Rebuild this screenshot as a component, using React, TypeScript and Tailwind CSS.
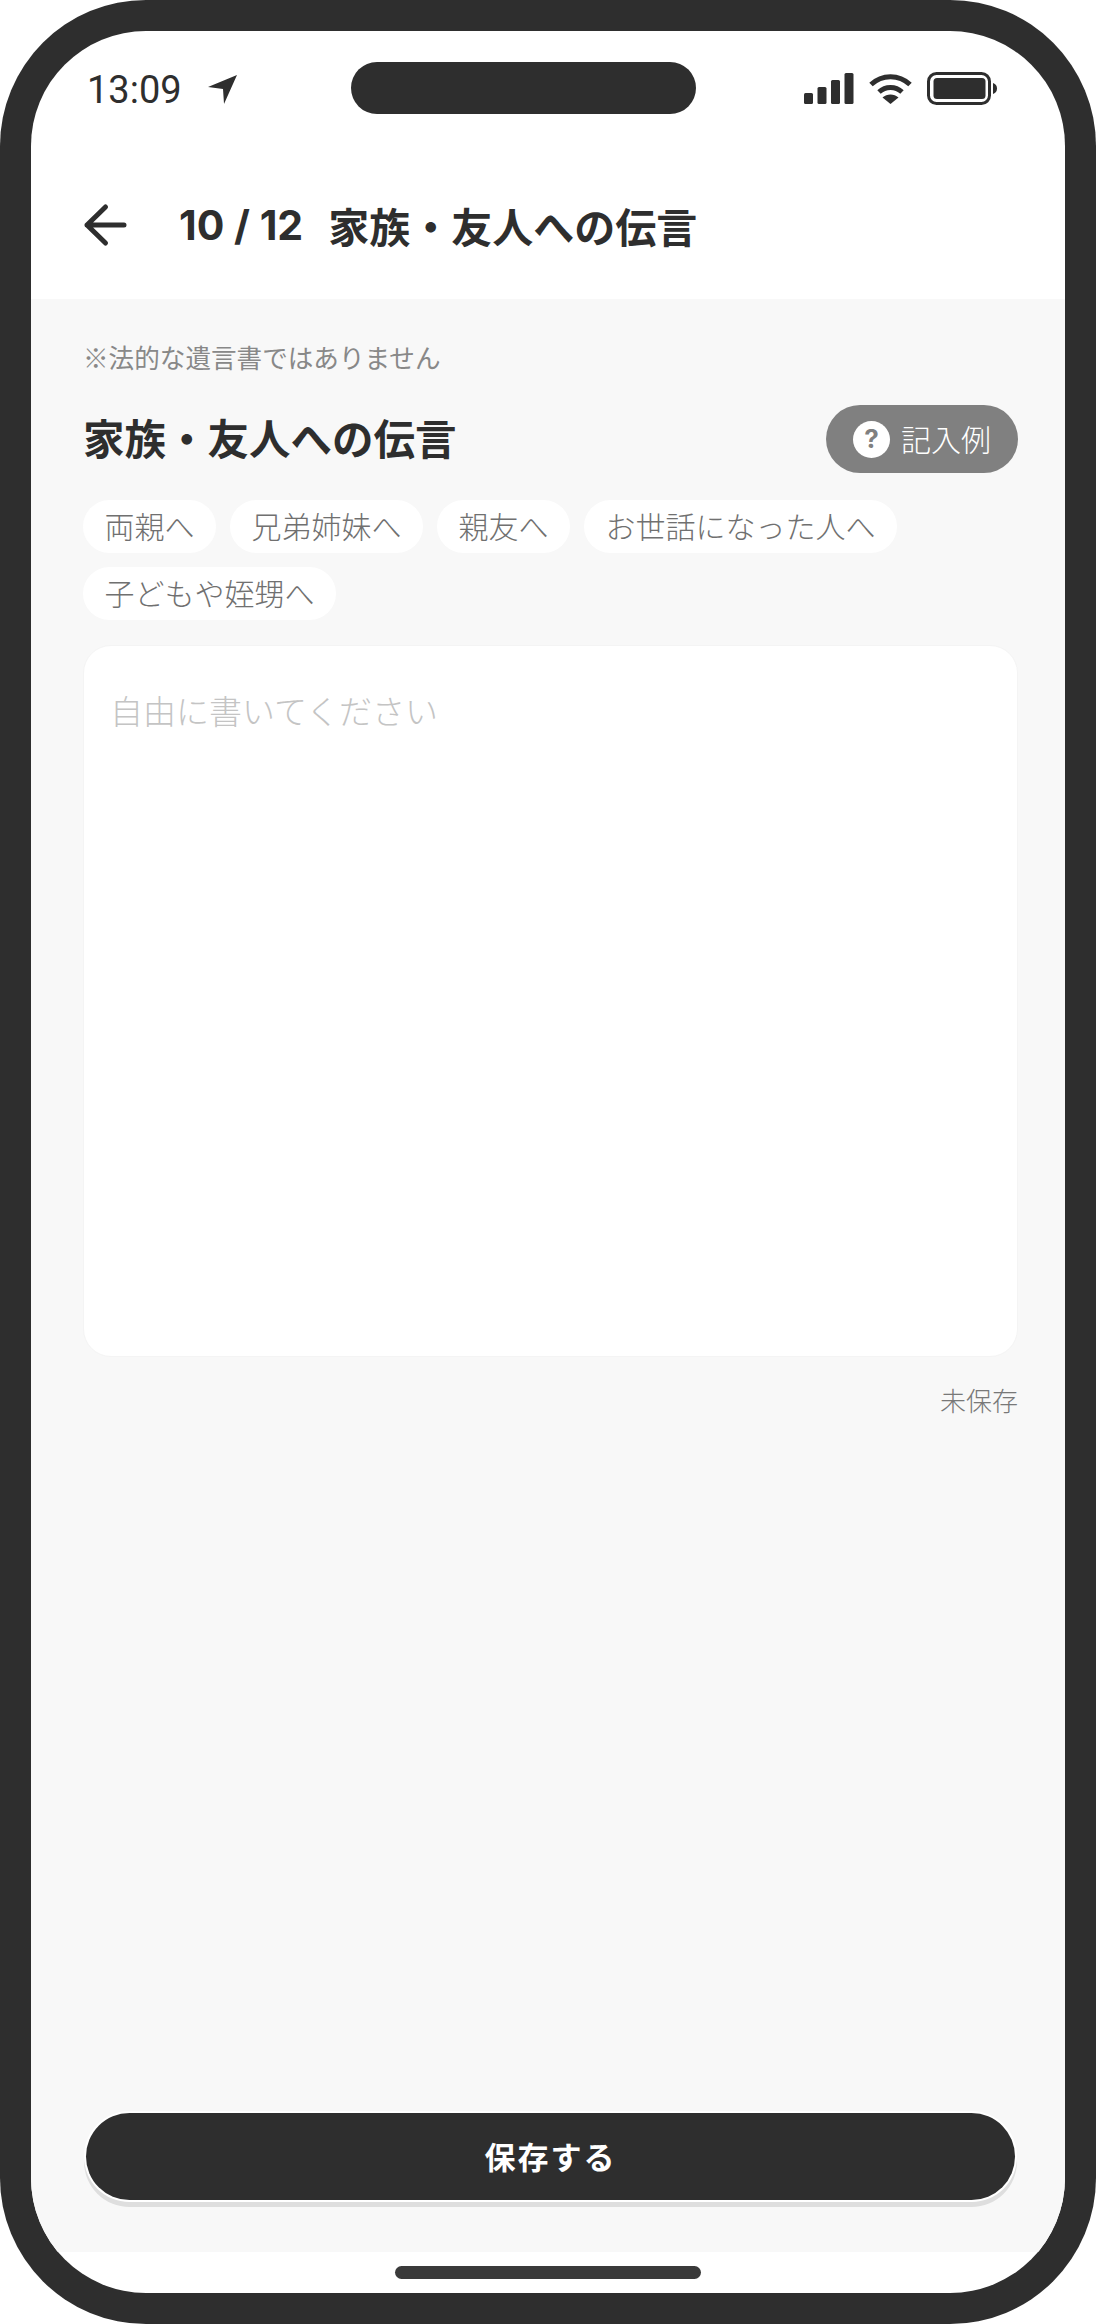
import React from 'react';

const chips = ['両親へ', '兄弟姉妹へ', '親友へ', 'お世話になった人へ', '子どもや姪甥へ'];

function StatusIcons() {
  return (
    <div className="flex items-center gap-[15px]">
      <svg width="50" height="31" viewBox="0 0 50 31" fill="#2e2e2e">
        <rect x="0" y="20" width="9" height="11" rx="1.5" />
        <rect x="13.5" y="14" width="9" height="17" rx="1.5" />
        <rect x="27" y="7" width="9" height="24" rx="1.5" />
        <rect x="40.5" y="0" width="9" height="31" rx="1.5" />
      </svg>
      <svg width="43" height="31" viewBox="0 0 43 31" fill="none" stroke="#2e2e2e" strokeWidth="5">
        <path d="M2 11.5C13 1 30 1 41 11.5" />
        <path d="M10 19C16.5 13 26.5 13 33 19" />
        <path d="M13.5 24.5C18 20.5 25 20.5 29.5 24.5L21.5 31Z" fill="#2e2e2e" stroke="none" />
      </svg>
      <svg width="71" height="33" viewBox="0 0 71 33" fill="#2e2e2e">
        <rect x="1.5" y="1.5" width="61" height="30" rx="8" fill="none" stroke="#2e2e2e" strokeWidth="3" />
        <rect x="6.5" y="6" width="52" height="21" rx="3.5" />
        <path d="M66 11C69 12 70 14 70 16.5C70 19 69 21 66 22Z" />
      </svg>
    </div>
  );
}

export default function App() {
  return (
    <div className="w-[1096px] h-[2324px] bg-white font-['Noto_Sans_CJK_JP',sans-serif]">
      <div className="w-full h-full p-[31px] bg-[#2e2e2e] rounded-[146px]">
        <div className="w-full h-full flex flex-col bg-white rounded-[115px] overflow-hidden">
          {/* Status bar */}
          <div className="h-[114px] pt-[31px] pl-[56px] pr-[67px] flex items-start shrink-0">
            <div className="w-[264px] h-[52px] flex items-center gap-[25px]">
              <span className="font-['Roboto',sans-serif] text-[38px] leading-none text-[#2e2e2e] mt-[3px]">13:09</span>
              <svg width="30" height="30" viewBox="0 0 30 30" fill="#2e2e2e" className="mt-[2px]">
                <path d="M30 1L1 13L16 15L17 30Z" />
              </svg>
            </div>
            <div className="w-[345px] h-[52px] rounded-full bg-[#2e2e2e]" />
            <div className="ml-auto h-[52px] flex items-center">
              <StatusIcons />
            </div>
          </div>

          {/* Header */}
          <div className="h-[154px] shrink-0 pl-[52px] flex items-center gap-[52px] pt-[6px]">
            <svg width="44" height="44" viewBox="0 0 44 44" fill="none" stroke="#2e2e2e" strokeWidth="5" strokeLinecap="round" strokeLinejoin="round">
              <path d="M41 22H4M22.5 4L4 22L22.5 40" />
            </svg>
            <div className="flex items-center gap-[25px] text-[41px] leading-none font-bold text-[#2e2e2e]">
              <span className="font-['Inter',sans-serif] font-bold">10 / 12</span>
              <span>家族・友人への伝言</span>
            </div>
          </div>

          {/* Body */}
          <div className="flex-1 bg-[#f8f8f8] flex flex-col pl-[52px] pr-[47px]">
            <p className="mt-[41px] text-[25.6px] leading-[34px] text-[#888888]">※法的な遺言書ではありません</p>
            <div className="mt-[31px] h-[68px] flex items-center justify-between">
              <h1 className="text-[41.5px] leading-none font-bold text-[#2e2e2e] mb-[3px]">家族・友人への伝言</h1>
              <button className="w-[192px] h-[68px] rounded-full bg-[#808080] flex items-center pl-[27px] gap-[11px]">
                <span className="w-[37px] h-[37px] rounded-full bg-white flex items-center justify-center font-['Inter',sans-serif] text-[26px] leading-none font-bold text-[#808080]">?</span>
                <span className="text-[30px] leading-none text-white font-light mb-[3px]">記入例</span>
              </button>
            </div>
            <div className="mt-[27px] flex flex-wrap gap-[14px]">
              {chips.map((chip) => (
                <span key={chip} className="h-[53px] px-[21.5px] pb-[4px] rounded-full bg-white flex items-center text-[30px] leading-none font-light text-[#707070]">
                  {chip}
                </span>
              ))}
            </div>
            <textarea
              placeholder="自由に書いてください"
              className="mt-[25px] h-[712px] shrink-0 w-full resize-none rounded-[28px] bg-white border border-[#f4f4f4] outline-none px-[26px] pt-[45px] text-[33px] leading-[38px] font-light placeholder:text-[#c4c4c4]"
            />
            <p className="mt-[26px] text-right text-[26px] leading-[34px] text-[#787878] font-light">未保存</p>
            <button className="mt-auto mb-[52px] mx-[3px] h-[87px] shrink-0 rounded-full bg-[#2e2e2e] text-white text-[31px] font-bold tracking-[2px] shadow-[0_0_0_2px_#ffffff,0_5px_0_2px_#dedede]">
              保存する
            </button>
          </div>

          {/* Home indicator */}
          <div className="h-[41px] shrink-0 flex justify-center pt-[14px]">
            <div className="w-[306px] h-[13px] rounded-full bg-[#3a3a3a]" />
          </div>
        </div>
      </div>
    </div>
  );
}
